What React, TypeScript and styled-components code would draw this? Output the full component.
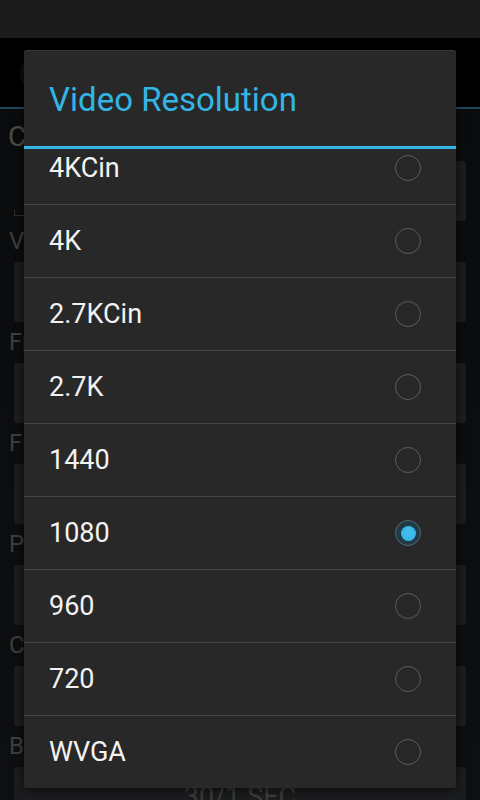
import styled, { createGlobalStyle } from "styled-components";

const GlobalStyle = createGlobalStyle`
  html, body {
    margin: 0;
    padding: 0;
    background: #0b0c0e;
  }
  body {
    font-family: Roboto, "Noto Sans", "DejaVu Sans", sans-serif;
    -webkit-font-smoothing: antialiased;
  }
`;

const settings = [
  { label: "Frame Rate", value: "" },
  { label: "Field of View", value: "" },
  { label: "Photo Resolution", value: "" },
  { label: "Continuous Shot", value: "" },
  { label: "Burst Rate", value: "30/1 SEC" },
];

const resolutions = ["4KCin", "4K", "2.7KCin", "2.7K", "1440", "1080", "960", "720", "WVGA"];

function App() {
  const selected = "1080";

  return (
    <>
      <GlobalStyle />
      <Screen>
        <StatusBar />
        <ActionBar>
          <ActionIcon />
        </ActionBar>
        <Content>
          <SectionHeader>Camera Settings</SectionHeader>
          <FieldRow>
            <EditLine />
            <SideButton />
          </FieldRow>
          <Label>Video Resolution</Label>
          <Field>1080</Field>
          {settings.map((s) => (
            <div key={s.label}>
              <Label>{s.label}</Label>
              <Field>{s.value}</Field>
            </div>
          ))}
        </Content>

        <Dialog>
          <Title>Video Resolution</Title>
          <TitleRule />
          <Viewport>
            <List>
              {resolutions.map((r) => (
                <Item key={r}>
                  <span>{r}</span>
                  <Radio $checked={r === selected} />
                </Item>
              ))}
            </List>
          </Viewport>
        </Dialog>
      </Screen>
    </>
  );
}

export default App;

const Screen = styled.div`
  position: relative;
  width: 480px;
  height: 800px;
  overflow: hidden;
  display: flex;
  flex-direction: column;
  background: #0b0c0e;
`;

const StatusBar = styled.div`
  height: 38px;
  flex-shrink: 0;
  background: #1b1b1b;
`;

const ActionBar = styled.div`
  height: 69px;
  flex-shrink: 0;
  background: #000;
  border-bottom: 2px solid #1c4a5c;
  display: flex;
  align-items: center;
  padding-left: 20px;
`;

const ActionIcon = styled.div`
  width: 36px;
  height: 36px;
  border-radius: 50%;
  background: #0c0d0f;
`;

const Content = styled.div`
  flex: 1;
  padding: 0 14px;
  background: linear-gradient(#0a0b0c, #0e0f11);
`;

const SectionHeader = styled.div`
  margin: 12px 0 8px -6px;
  height: 32px;
  line-height: 32px;
  font-size: 28px;
  color: #4a4a4a;
  white-space: nowrap;
`;

const FieldRow = styled.div`
  height: 60px;
  display: flex;
  gap: 12px;
`;

const EditLine = styled.div`
  flex: 1;
  position: relative;
  &::after {
    content: "";
    position: absolute;
    left: 0;
    right: 0;
    top: 49px;
    height: 5px;
    border: 1px solid #2c2c2c;
    border-top: none;
  }
`;

const SideButton = styled.div`
  width: 150px;
  background: #1b1c1e;
  border-radius: 2px;
`;

const Label = styled.div`
  height: 41px;
  line-height: 41px;
  margin-left: -5px;
  font-size: 24px;
  color: #3e3e3e;
  white-space: nowrap;
`;

const Field = styled.div`
  height: 60px;
  border-radius: 2px;
  background: #1b1c1e;
  display: flex;
  align-items: center;
  justify-content: center;
  font-size: 27px;
  color: #3c3c3c;
`;

const Dialog = styled.div`
  position: absolute;
  top: 50px;
  left: 24px;
  width: 432px;
  height: 738px;
  display: flex;
  flex-direction: column;
  background: #282828;
  border-radius: 3px;
  box-shadow: inset 0 1px 0 #383838, 0 2px 10px rgba(0, 0, 0, 0.6);
  overflow: hidden;
`;

const Title = styled.div`
  height: 96px;
  flex-shrink: 0;
  display: flex;
  align-items: center;
  padding: 2px 0 0 25px;
  box-sizing: border-box;
  font-size: 33px;
  color: #33b5e5;
`;

const TitleRule = styled.div`
  height: 3px;
  flex-shrink: 0;
  background: #33b5e5;
`;

const Viewport = styled.div`
  flex: 1;
  overflow: hidden;
`;

const List = styled.div`
  margin-top: -17px;
`;

const Item = styled.div`
  height: 72px;
  display: flex;
  align-items: center;
  justify-content: space-between;
  padding: 0 35px 0 25px;
  font-size: 27px;
  color: #f2f2f2;
  & + & {
    border-top: 1px solid #444;
  }
`;

const Radio = styled.span<{ $checked?: boolean }>`
  width: 26px;
  height: 26px;
  box-sizing: border-box;
  border-radius: 50%;
  border: 1.5px solid ${(p) => (p.$checked ? "#58666c" : "#5c5c5c")};
  background: ${(p) => (p.$checked ? "#1f3b48" : "transparent")};
  display: flex;
  align-items: center;
  justify-content: center;

  &::after {
    content: "";
    display: ${(p) => (p.$checked ? "block" : "none")};
    width: 15px;
    height: 15px;
    border-radius: 50%;
    background: radial-gradient(circle at 50% 40%, #45c2ef, #2fb0e2);
  }
`;
